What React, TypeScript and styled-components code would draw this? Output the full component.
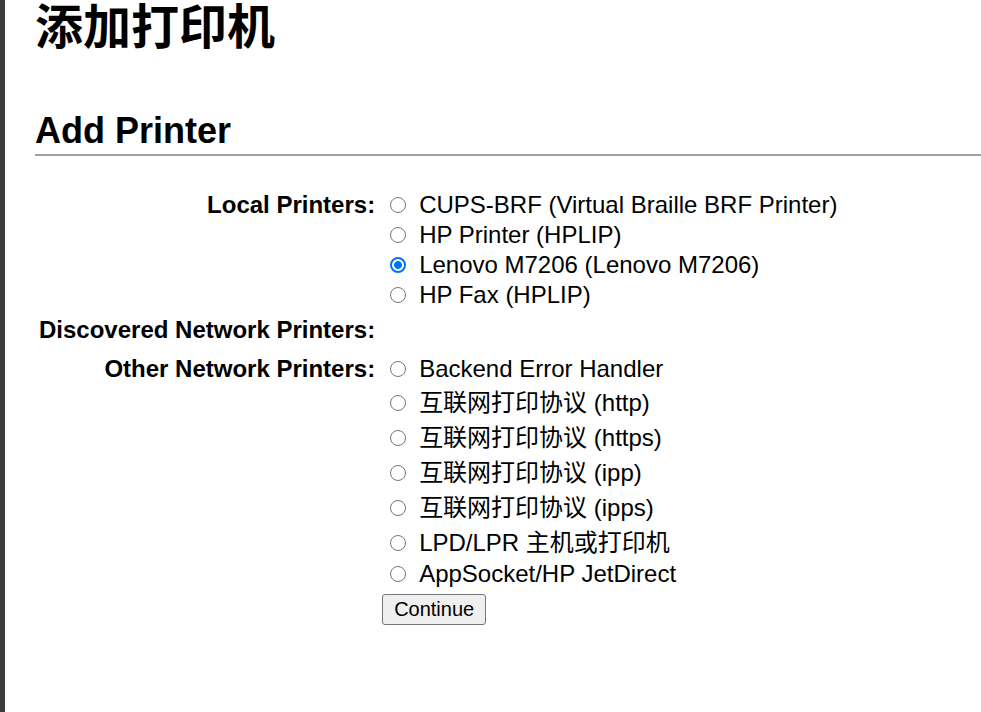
import styled, { createGlobalStyle } from 'styled-components';

const GlobalStyle = createGlobalStyle`
  html, body {
    margin: 0;
    padding: 0;
    background: #ffffff;
  }

  body {
    font-family: 'Liberation Sans', Arial, 'Noto Sans CJK SC', sans-serif;
    color: #000000;
  }
`;

const localPrinters = [
  { label: 'CUPS-BRF (Virtual Braille BRF Printer)' },
  { label: 'HP Printer (HPLIP)' },
  { label: 'Lenovo M7206 (Lenovo M7206)', checked: true },
  { label: 'HP Fax (HPLIP)' },
];

const otherPrinters = [
  { label: 'Backend Error Handler' },
  { label: '互联网打印协议 (http)' },
  { label: '互联网打印协议 (https)' },
  { label: '互联网打印协议 (ipp)' },
  { label: '互联网打印协议 (ipps)' },
  { label: 'LPD/LPR 主机或打印机' },
  { label: 'AppSocket/HP JetDirect' },
];

const hasCjk = (text: string) => /[\u4e00-\u9fff]/.test(text);

export const Page = styled.div`
  display: flex;
  min-height: 100vh;
  overflow: hidden;
`;

export const SideBar = styled.div`
  width: 5px;
  flex-shrink: 0;
  background-color: #3a3a3a;
`;

export const Main = styled.div`
  flex: 1;
  padding-left: 30px;
  min-width: 0;
`;

export const Title = styled.h1`
  margin: -12px 0 0;
  font-size: 48px;
  font-weight: bold;
  line-height: normal;
`;

export const Heading = styled.h2`
  margin: 52px 0 0;
  padding-bottom: 2px;
  font-size: 36px;
  font-weight: bold;
  line-height: normal;
  border-bottom: 2px solid #a0a0a0;
`;

export const Form = styled.form`
  display: grid;
  grid-template-columns: max-content 1fr;
  column-gap: 7px;
  row-gap: 5px;
  margin: 34px 0 0 4px;
  font-size: 24px;
`;

export const Label = styled.div`
  align-self: start;
  text-align: right;
  font-weight: bold;
  line-height: 30px;
  white-space: nowrap;
`;

export const Options = styled.div<{ $minHeight?: number }>`
  min-height: ${(props) => (props.$minHeight ? `${props.$minHeight}px` : '0')};
`;

export const Option = styled.label<{ $tall: boolean }>`
  display: block;
  white-space: nowrap;
  padding-top: ${(props) => (props.$tall ? '3.4px' : '0')};
  line-height: ${(props) => (props.$tall ? '31.6px' : '30px')};
  height: ${(props) => (props.$tall ? '35px' : '30px')};
  box-sizing: border-box;
`;

export const RadioMark = styled.span<{ $checked?: boolean }>`
  display: inline-block;
  box-sizing: border-box;
  width: 16px;
  height: 16px;
  margin: 0 13px 0 8px;
  vertical-align: baseline;
  border-radius: 50%;
  border: ${(props) => (props.$checked ? '2px solid #0075ff' : '1.3px solid #767676')};
  background: ${(props) =>
    props.$checked
      ? 'radial-gradient(circle, #0075ff 0 3.6px, #ffffff 4.2px)'
      : '#ffffff'};
`;

export const HiddenRadio = styled.input.attrs({ type: 'radio' })`
  position: absolute;
  opacity: 0;
  width: 0;
  height: 0;
  margin: 0;
`;

export const Button = styled.button`
  display: block;
  margin-top: 5px;
  height: 31px;
  padding: 0 11px;
  font-family: 'Liberation Sans', Arial, sans-serif;
  font-size: 20px;
  color: #000000;
  background-color: #efefef;
  border: 1px solid #767676;
  border-radius: 3px;
`;

function OptionRow({ label, checked }: { label: string; checked?: boolean }) {
  return (
    <Option $tall={hasCjk(label)}>
      <HiddenRadio name="device_uri" defaultChecked={checked} />
      <RadioMark $checked={checked} />
      {label}
    </Option>
  );
}

export default function App() {
  return (
    <>
      <GlobalStyle />
      <Page>
        <SideBar />
        <Main>
          <Title>添加打印机</Title>
          <Heading>Add Printer</Heading>
          <Form onSubmit={(e) => e.preventDefault()}>
            <Label>Local Printers:</Label>
            <Options>
              {localPrinters.map((p) => (
                <OptionRow key={p.label} label={p.label} checked={p.checked} />
              ))}
            </Options>
            <Label>Discovered Network Printers:</Label>
            <Options $minHeight={34} />
            <Label>Other Network Printers:</Label>
            <Options>
              {otherPrinters.map((p) => (
                <OptionRow key={p.label} label={p.label} />
              ))}
              <Button type="submit">Continue</Button>
            </Options>
          </Form>
        </Main>
      </Page>
    </>
  );
}
